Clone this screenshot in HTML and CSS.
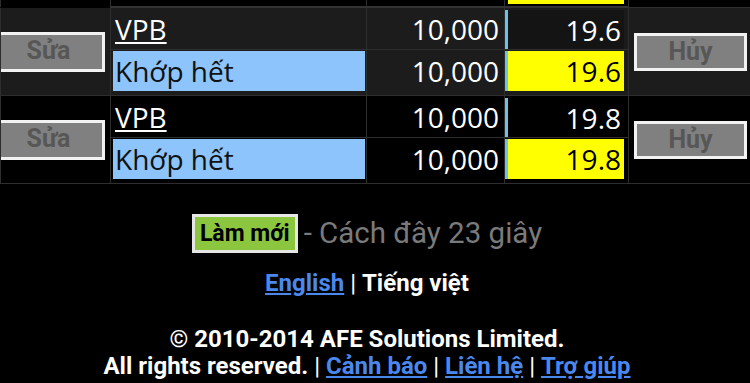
FILE: index.html
```html
<!DOCTYPE html>
<html lang="vi">
<head>
<meta charset="utf-8">
<title>Lệnh đặt</title>
<link rel="stylesheet" href="styles.css">
</head>
<body>
<table class="orders">
  <colgroup>
    <col class="c-act"><col class="c-sym"><col class="c-qty"><col class="c-price"><col class="c-cancel">
  </colgroup>
  <tbody class="prev">
    <tr>
      <td></td>
      <td class="tailcell"></td>
      <td class="tailcell"></td>
      <td class="price tailcell"><div class="tail"></div></td>
      <td></td>
    </tr>
  </tbody>
  <tbody class="order alt">
    <tr class="r1">
      <td rowspan="2" class="act"><span class="btn btn-edit">Sửa</span></td>
      <td class="sym"><a href="#" class="code">VPB</a></td>
      <td class="qty">10,000</td>
      <td class="price"><div class="pv">19.6</div></td>
      <td rowspan="2" class="cancel"><span class="btn btn-cancel">Hủy</span></td>
    </tr>
    <tr class="r2">
      <td class="sym"><div class="status">Khớp hết</div></td>
      <td class="qty">10,000</td>
      <td class="price"><div class="pv matched">19.6</div></td>
    </tr>
  </tbody>
  <tbody class="order">
    <tr class="r1">
      <td rowspan="2" class="act"><span class="btn btn-edit">Sửa</span></td>
      <td class="sym"><a href="#" class="code">VPB</a></td>
      <td class="qty">10,000</td>
      <td class="price"><div class="pv">19.8</div></td>
      <td rowspan="2" class="cancel"><span class="btn btn-cancel">Hủy</span></td>
    </tr>
    <tr class="r2">
      <td class="sym"><div class="status">Khớp hết</div></td>
      <td class="qty">10,000</td>
      <td class="price"><div class="pv matched">19.8</div></td>
    </tr>
  </tbody>
</table>

<footer class="footer">
  <div class="refresh">
    <span class="refresh-btn">Làm mới</span>
    <span class="ago">- Cách đây 23 giây</span>
  </div>
  <div class="lang">
    <a href="#" class="link">English</a><span class="sep"> | </span><span class="current">Tiếng việt</span>
  </div>
  <div class="copy">
    <div>© 2010-2014 AFE Solutions Limited.</div>
    <div>All rights reserved.<span class="sep"> | </span><a href="#" class="link">Cảnh báo</a><span class="sep"> | </span><a href="#" class="link">Liên hệ</a><span class="sep"> | </span><a href="#" class="link">Trợ giúp</a></div>
  </div>
</footer>
</body>
</html>
```

FILE: styles.css
```css
html, body {
  margin: 0;
  padding: 0;
  background: #000;
}
body {
  width: 750px;
  height: 383px;
  overflow: hidden;
  font-family: "Open Sans", "DejaVu Sans", sans-serif;
  color: #fff;
}

.orders {
  border-collapse: collapse;
  table-layout: fixed;
  width: 762px;
}
.c-act { width: 110px; }
.c-sym { width: 256px; }
.c-qty { width: 138px; }
.c-price { width: 124px; }
.c-cancel { width: 134px; }

.orders td {
  border: 1px solid #2e2e2e;
  padding: 0;
  font-size: 28px;
  line-height: 40px;
  color: #fff;
  background: #000;
}
.orders .alt td { background: #1c1c1c; }

/* partial previous row */
.prev td {
  height: 6px;
  line-height: 0;
  padding: 0;
  border-top: none;
}
.prev td:first-child { border-bottom-color: #000; }
.prev .tailcell { border-bottom: 2px solid #333; }
.prev .tail {
  height: 4px;
  background: #ffff00;
  margin-left: 3px;
  margin-right: 0;
}

.r1 td { padding-top: 1px; }
.r2 td { padding-top: 1px; padding-bottom: 4px; }
.r1 .price { padding-top: 2px; }

.act, .cancel {
  vertical-align: middle;
  overflow: hidden;
}
.sym { padding-left: 2px !important; padding-right: 1px !important; }
.code {
  color: #fff;
  text-decoration: underline;
  text-decoration-thickness: 2px;
  text-underline-offset: 2px;
  padding-left: 2px;
}
.status {
  background: #8cc4fb;
  color: #111;
  height: 40px;
  padding-left: 2px;
}
.qty {
  text-align: right;
  padding-right: 5px !important;
  vertical-align: top;
}
.price {
  padding-right: 4px !important;
  vertical-align: top;
}
.pv {
  border-left: 3px solid #6cc4e4;
  text-align: right;
  padding-right: 3px;
  height: 39px;
}
.orders .alt .r1 .pv { background: #141414; }
.r2 .pv { height: 40px; }
.orders .pv.matched {
  background: #ffff00;
  color: #000;
}

.btn {
  display: block;
  box-sizing: border-box;
  border: 3px solid #f2f2f2;
  background: #808080;
  color: #575757;
  font-family: Roboto, "Noto Sans", sans-serif;
  font-weight: bold;
  font-size: 25px;
  line-height: 32px;
  text-align: center;
}
.btn-edit {
  width: 113px;
  height: 40px;
  margin-left: -9px;
}
.btn-cancel {
  width: 113px;
  height: 38px;
  margin-left: 5px;
}

/* footer */
.footer {
  width: 734px;
  font-family: Roboto, "Noto Sans", sans-serif;
  text-align: center;
}
.refresh {
  display: flex;
  justify-content: center;
  align-items: center;
  margin-top: 29px;
  height: 40px;
}
.refresh-btn {
  box-sizing: border-box;
  height: 39px;
  line-height: 33px;
  padding: 0 5px;
  background: #8cc63f;
  border: 3px solid #e6e6e6;
  color: #000;
  font-weight: bold;
  font-size: 23px;
}
.ago {
  color: #7a7a7a;
  font-size: 29.5px;
  margin-left: 6px;
}
.lang {
  margin-top: 15px;
  font-size: 24px;
  font-weight: bold;
  line-height: 30px;
}
.link {
  color: #4a88ee;
  text-decoration: underline;
}
.sep {
  font-weight: normal;
  color: #fff;
}
.current { color: #fff; }
.copy {
  margin-top: 28px;
  font-size: 24px;
  font-weight: bold;
  line-height: 27px;
}
```
